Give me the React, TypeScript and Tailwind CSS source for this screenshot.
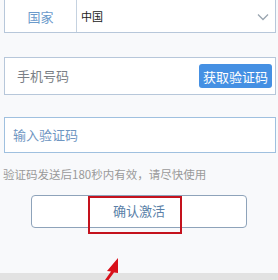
import React from 'react';

const font = { fontFamily: '"Noto Sans CJK SC", "Liberation Sans", sans-serif' };

export default function App() {
  return (
    <div className="relative w-[278px] h-[280px] overflow-hidden bg-[#f8f9fb]" style={font}>
      <div className="pl-[4px] pr-[2px] -mt-[3px]">
        {/* Country row */}
        <div className="flex h-[36px] border-[1.5px] border-[#b7c7da] bg-white">
          <div className="w-[72px] flex items-center justify-center text-[13px] text-[#6b9acb] border-r-[1.5px] border-[#c5d2e0] pt-[3px]">
            国家
          </div>
          <div className="flex-1 flex items-center justify-between pl-[4px] pr-[6px] pt-[3px]">
            <span className="text-[11px] text-[#222]">中国</span>
            <svg width="12" height="8" viewBox="0 0 12 8" fill="none" stroke="#9aa5b0" strokeWidth="1.3">
              <path d="M1 1.5 L6 6.5 L11 1.5" />
            </svg>
          </div>
        </div>

        {/* Phone row */}
        <div className="mt-[24px] flex h-[38px] items-center justify-between border-[1.5px] border-[#b7c7da] bg-white pl-[12px] pr-[3px]">
          <span className="text-[13px] text-[#7a7f86]">手机号码</span>
          <button className="h-[24px] px-[4px] rounded-[3px] bg-[#4590e3] text-white text-[13px] leading-none">
            获取验证码
          </button>
        </div>

        {/* Code row */}
        <div className="mt-[22px] flex h-[36px] items-center border-[1.5px] border-[#9fc0df] bg-white pl-[8px]">
          <span className="text-[13px] text-[#6f96c2]">输入验证码</span>
        </div>

        <p className="mt-[16px] text-[11.5px] leading-none text-[#9a9a9a] -ml-[1px]">
          验证码发送后180秒内有效，请尽快使用
        </p>

        <div className="mt-[14px] flex justify-center pr-[2px]">
          <button className="w-[216px] h-[33px] rounded-[4px] border-[1.5px] border-[#8ea3ba] bg-white text-[13px] text-[#5a7fa8]">
            确认激活
          </button>
        </div>
      </div>

      <div className="absolute left-0 bottom-0 w-full h-[7px] bg-[#e2e2e2]" />

      {/* annotation: red highlight box */}
      <div className="absolute left-[88px] top-[196px] w-[94px] h-[38px] border-[2.5px] border-[#c4121d]" />

      {/* annotation: red arrow */}
      <svg className="absolute left-[100px] top-[255px]" width="26" height="25" viewBox="0 0 26 25">
        <path d="M18 3 L7 16 L11 16.5 L5 25 L8.5 25 L14 17.5 L18 18 Z" fill="#d8101a" />
      </svg>
    </div>
  );
}
